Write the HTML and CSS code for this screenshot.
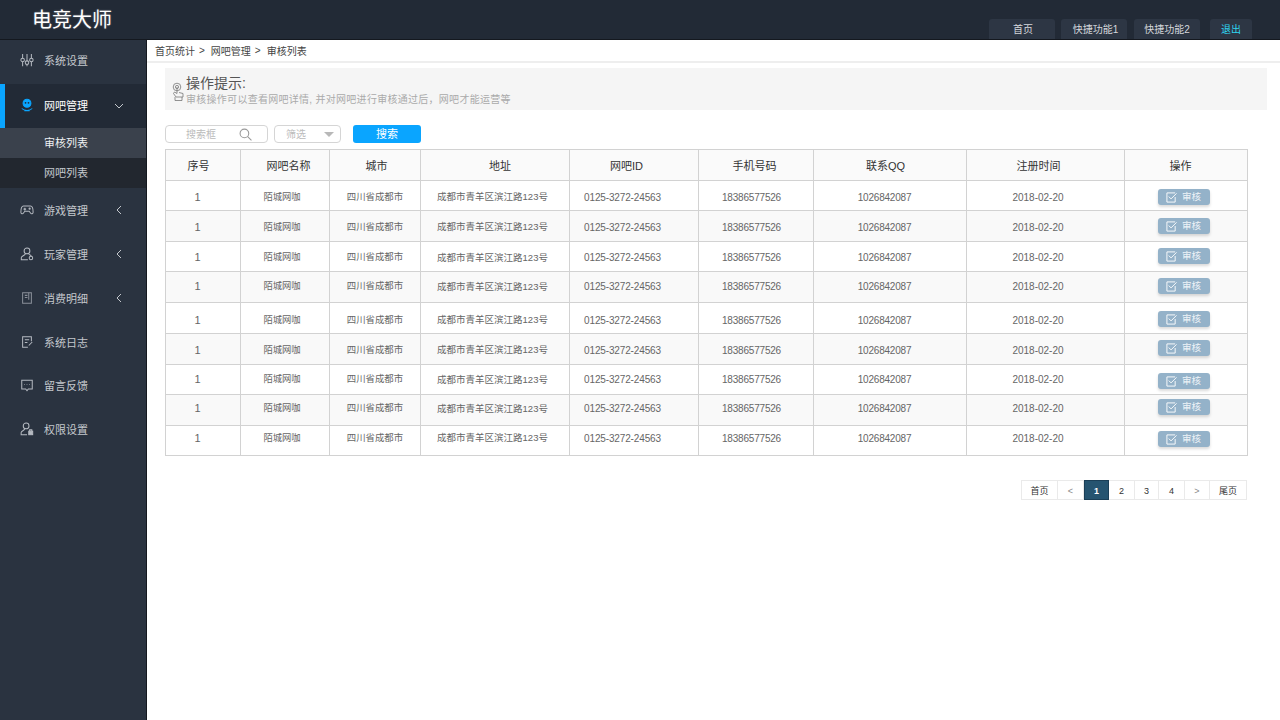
FILE: index.html
```html
<!DOCTYPE html>
<html lang="zh">
<head>
<meta charset="utf-8">
<title>电竞大师</title>
<link rel="stylesheet" href="styles.css">
</head>
<body>
<header class="topbar">
  <div class="logo">电竞大师</div>
  <nav class="tabs">
    <a class="tab t1">首页</a>
    <a class="tab t1">快捷功能1</a>
    <a class="tab t1">快捷功能2</a>
    <a class="tab exit">退出</a>
  </nav>
</header>
<div class="body">
  <aside class="sidebar">
    <div class="item up2">
      <svg class="ico" viewBox="0 0 16 16"><path d="M3 1v14M8 1v14M13 1v14"/><circle cx="3" cy="8" r="2" class="f"/><circle cx="8" cy="11" r="2" class="f"/><circle cx="13" cy="8" r="2" class="f"/></svg>
      <span>系统设置</span>
    </div>
    <div class="item active up1">
      <svg class="ico blue" viewBox="0 0 16 16"><circle cx="8" cy="6" r="4.500" fill="#0aa5ff"/><circle cx="6.300" cy="5.500" r="1" fill="#222a36" stroke="none"/><circle cx="9.700" cy="5.500" r="1" fill="#222a36" stroke="none"/><path d="M2 12c3 3 9 3 12 0M5 14.500h6"/></svg>
      <span>网吧管理</span>
      <svg class="chev" viewBox="0 0 10 10"><path d="M1 3l4 4 4-4"/></svg>
    </div>
    <div class="sub sel">审核列表</div>
    <div class="sub">网吧列表</div>
    <div class="item">
      <svg class="ico" viewBox="0 0 16 16"><path d="M4 3.500h8c2 0 3 4 3 7 0 2-2 2.500-3 1l-1.500-2h-5L4 11.500c-1 1.500-3 1-3-1 0-3 1-7 3-7zM4 7h3M5.500 5.500v3"/><circle cx="11" cy="6.500" r=".7"/></svg>
      <span>游戏管理</span>
      <svg class="chev" viewBox="0 0 10 10"><path d="M7 1L3 5l4 4"/></svg>
    </div>
    <div class="item">
      <svg class="ico" viewBox="0 0 16 16"><circle cx="8" cy="4.500" r="3.300"/><path d="M6 8c-1 2-4 2-4.500 4v2.500H9M10 8c1 1 2 1.500 3 2"/><circle cx="12.500" cy="12.500" r="2"/></svg>
      <span>玩家管理</span>
      <svg class="chev" viewBox="0 0 10 10"><path d="M7 1L3 5l4 4"/></svg>
    </div>
    <div class="item">
      <svg class="ico dimmed" viewBox="0 0 16 16"><path d="M3 2h10v12H3zM5.500 5h3M5.500 7.500h3"/><path d="M10 2v8"/></svg>
      <span>消费明细</span>
      <svg class="chev" viewBox="0 0 10 10"><path d="M7 1L3 5l4 4"/></svg>
    </div>
    <div class="item">
      <svg class="ico" viewBox="0 0 16 16"><path d="M13 7V2H3v12h6M5.500 5.500h5M5.500 8.500h3M10 12l4-4"/></svg>
      <span>系统日志</span>
    </div>
    <div class="item up1">
      <svg class="ico" viewBox="0 0 16 16"><path d="M2 2.500h12v10H9.500L8 14.500 6.500 12.500H2z"/><path d="M5 7.500h.6M7.700 7.500h.6M10.400 7.500h.6"/></svg>
      <span>留言反馈</span>
    </div>
    <div class="item up1">
      <svg class="ico" viewBox="0 0 16 16"><circle cx="7" cy="4.500" r="3.300"/><path d="M5.300 8c-.8 2-3.600 2-4 4v2.500H8"/><rect x="10" y="10.500" width="4.500" height="4" fill="#b5bac1"/><path d="M11 10.500V9h2.500v1.500"/></svg>
      <span>权限设置</span>
    </div>
  </aside>
  <main class="main">
    <div class="crumbs"><span>首页统计</span><i>&gt;</i><span>网吧管理</span><i>&gt;</i><span>审核列表</span></div>
    <div class="content">
      <section class="hint">
        <svg class="hand" viewBox="0 0 12 20"><circle cx="5" cy="5" r="3.800"/><circle cx="5" cy="5" r="1.600"/><path d="M5 5v6.500L2.500 10 1.500 11.500 4 15h7v-3.500L7 10.500M3 15v3.500h7V15"/></svg>
        <div class="hint-text">
          <h2>操作提示:</h2>
          <p>审核操作可以查看网吧详情, 并对网吧进行审核通过后，网吧才能运营等</p>
        </div>
      </section>
      <form class="filters">
        <div class="search"><span>搜索框</span><svg viewBox="0 0 12 12"><circle cx="5" cy="5" r="4"/><path d="M8 8l3.500 3.500"/></svg></div>
        <div class="select"><span>筛选</span><b class="caret"></b></div>
        <div class="go">搜索</div>
      </form>
      <table class="grid">
        <colgroup><col class="c1"><col class="c2"><col class="c3"><col class="c4"><col class="c5"><col class="c6"><col class="c7"><col class="c8"><col class="c9"></colgroup>
        <thead><tr><th>序号</th><th>网吧名称</th><th>城市</th><th>地址</th><th>网吧ID</th><th>手机号码</th><th>联系QQ</th><th>注册时间</th><th>操作</th></tr></thead>
        <tbody>
          <tr><td>1</td><td>陌城网咖</td><td>四川省成都市</td><td class="addr">成都市青羊区滨江路123号</td><td>0125-3272-24563</td><td>18386577526</td><td>1026842087</td><td>2018-02-20</td><td class="op"><a class="audit"><svg viewBox="0 0 12 12"><path d="M10 5.500V11H1V1h9"/><path d="M3 5l2.500 2.500L11.500 1.500"/></svg>审核</a></td></tr>
          <tr><td>1</td><td>陌城网咖</td><td>四川省成都市</td><td class="addr">成都市青羊区滨江路123号</td><td>0125-3272-24563</td><td>18386577526</td><td>1026842087</td><td>2018-02-20</td><td class="op"><a class="audit"><svg viewBox="0 0 12 12"><path d="M10 5.500V11H1V1h9"/><path d="M3 5l2.500 2.500L11.500 1.500"/></svg>审核</a></td></tr>
          <tr><td>1</td><td>陌城网咖</td><td>四川省成都市</td><td class="addr">成都市青羊区滨江路123号</td><td>0125-3272-24563</td><td>18386577526</td><td>1026842087</td><td>2018-02-20</td><td class="op"><a class="audit"><svg viewBox="0 0 12 12"><path d="M10 5.500V11H1V1h9"/><path d="M3 5l2.500 2.500L11.500 1.500"/></svg>审核</a></td></tr>
          <tr><td>1</td><td>陌城网咖</td><td>四川省成都市</td><td class="addr">成都市青羊区滨江路123号</td><td>0125-3272-24563</td><td>18386577526</td><td>1026842087</td><td>2018-02-20</td><td class="op"><a class="audit"><svg viewBox="0 0 12 12"><path d="M10 5.500V11H1V1h9"/><path d="M3 5l2.500 2.500L11.500 1.500"/></svg>审核</a></td></tr>
          <tr><td>1</td><td>陌城网咖</td><td>四川省成都市</td><td class="addr">成都市青羊区滨江路123号</td><td>0125-3272-24563</td><td>18386577526</td><td>1026842087</td><td>2018-02-20</td><td class="op"><a class="audit"><svg viewBox="0 0 12 12"><path d="M10 5.500V11H1V1h9"/><path d="M3 5l2.500 2.500L11.500 1.500"/></svg>审核</a></td></tr>
          <tr><td>1</td><td>陌城网咖</td><td>四川省成都市</td><td class="addr">成都市青羊区滨江路123号</td><td>0125-3272-24563</td><td>18386577526</td><td>1026842087</td><td>2018-02-20</td><td class="op"><a class="audit"><svg viewBox="0 0 12 12"><path d="M10 5.500V11H1V1h9"/><path d="M3 5l2.500 2.500L11.500 1.500"/></svg>审核</a></td></tr>
          <tr><td>1</td><td>陌城网咖</td><td>四川省成都市</td><td class="addr">成都市青羊区滨江路123号</td><td>0125-3272-24563</td><td>18386577526</td><td>1026842087</td><td>2018-02-20</td><td class="op"><a class="audit"><svg viewBox="0 0 12 12"><path d="M10 5.500V11H1V1h9"/><path d="M3 5l2.500 2.500L11.500 1.500"/></svg>审核</a></td></tr>
          <tr><td>1</td><td>陌城网咖</td><td>四川省成都市</td><td class="addr">成都市青羊区滨江路123号</td><td>0125-3272-24563</td><td>18386577526</td><td>1026842087</td><td>2018-02-20</td><td class="op"><a class="audit"><svg viewBox="0 0 12 12"><path d="M10 5.500V11H1V1h9"/><path d="M3 5l2.500 2.500L11.500 1.500"/></svg>审核</a></td></tr>
          <tr><td>1</td><td>陌城网咖</td><td>四川省成都市</td><td class="addr">成都市青羊区滨江路123号</td><td>0125-3272-24563</td><td>18386577526</td><td>1026842087</td><td>2018-02-20</td><td class="op"><a class="audit"><svg viewBox="0 0 12 12"><path d="M10 5.500V11H1V1h9"/><path d="M3 5l2.500 2.500L11.500 1.500"/></svg>审核</a></td></tr>
        </tbody>
      </table>
      <div class="pager">
        <a class="p w37">首页</a><a class="p w26 dim">&lt;</a><a class="p w25 on">1</a><a class="p w26">2</a><a class="p w24">3</a><a class="p w26">4</a><a class="p w25 dim">&gt;</a><a class="p w37">尾页</a>
      </div>
    </div>
  </main>
</div>
</body>
</html>
```
FILE: styles.css
```css
* { box-sizing: border-box; }
html, body { margin: 0; height: 100%; }
body {
  width: 1280px; height: 720px; overflow: hidden; background: #fff;
  font-family: "Liberation Sans", "Noto Sans CJK SC", sans-serif;
  font-size: 10px; color: #666;
  display: flex; flex-direction: column;
}
.topbar {
  height: 40px; flex: none; background: #222a36; border-bottom: 1px solid #14181f;
  display: flex; justify-content: space-between; padding-left: 32px;
}
.logo { font-size: 20px; line-height: 40px; color: #fff; text-shadow: 0 0 2px rgba(255,255,255,.35); }
.tabs { display: flex; align-items: flex-end; margin-right: 28px; }
.tab {
  height: 20px; line-height: 21px; text-align: center; font-size: 10px;
  background: #2d3644; border-radius: 3px 3px 0 0; color: #d5d8dc;
}
.t1 { width: 66px; margin-right: 6px; }
.t1:first-child { padding-left: 2px; margin-right: 6px; }
.t1:nth-child(2) { margin-right: 7px; padding-left: 3px; }
.exit { width: 42px; margin-left: 4px; color: #2fd5f0; }

.body { flex: 1; display: flex; min-height: 0; }
.sidebar {
  width: 147px; flex: none; background: #2a3340; border-right: 1px solid #14181f;
  color: #c4c8cd; font-size: 11px;
}
.item {
  height: 44px; display: flex; align-items: center; padding-left: 20px; position: relative;
}
.item span { margin-left: 10px; }
.up1 { padding-bottom: 2px; }
.up2 { padding-bottom: 4px; }
.active { background: #222a36; border-left: 5px solid #0aa5ff; padding-left: 15px; color: #fff; }
.ico { width: 14px; height: 14px; fill: none; stroke: #b5bac1; stroke-width: 1.15; flex: none; }
.ico .f { fill: #2a3340; }
.ico.blue { stroke: #0aa5ff; }
.ico.dimmed { stroke: #8a9099; }
.chev { position: absolute; left: 114px; top: 17px; width: 10px; height: 10px; fill: none; stroke: #c4c8cd; stroke-width: 1; }
.active .chev { left: 109px; }
.sub { height: 30px; line-height: 30px; padding-left: 44px; background: #22272f; }
.sub.sel { background: #3a414c; color: #eef0f2; }

.main { flex: 1; min-width: 0; }
.crumbs {
  height: 23px; display: flex; align-items: center; padding-left: 8px; color: #444;
  border-bottom: 2px solid #eee;
}
.crumbs i { font-style: normal; margin: 0 6px 0 4px; }
.content { padding: 5px 0 0 18px; }
.hint {
  width: 1102px; height: 42px; background: #f5f5f5;
  display: flex; align-items: flex-start; padding: 7px 0 0 7px;
}
.hand { width: 12px; height: 20px; margin-top: 7px; fill: none; stroke: #777; stroke-width: .8; flex: none; }
.hint-text { margin-left: 2px; }
.hint h2 { margin: 0; font-size: 14px; line-height: 16px; font-weight: 400; color: #555; }
.hint p { margin: 2px 0 0; font-size: 10px; line-height: 14px; color: #aaa; letter-spacing: .28px; }
.filters { height: 18px; margin: 15px 0 6px; display: flex; }
.search, .select {
  height: 18px; border: 1px solid #d5d5d5; border-radius: 4px; color: #bbb;
  position: relative; line-height: 17px;
}
.search { width: 103px; padding-left: 20px; }
.search svg { position: absolute; left: 73px; top: 2px; width: 13px; height: 13px; fill: none; stroke: #999; stroke-width: 1; }
.select { width: 67px; margin-left: 6px; padding-left: 11px; }
.caret {
  position: absolute; right: 6px; top: 6px; border-style: solid; border-width: 5px 5px 0 5px;
  border-color: #b8b8b8 transparent transparent transparent; width: 0; height: 0;
}
.go {
  width: 68px; height: 18px; margin-left: 12px; background: #0aa5ff; border-radius: 3px;
  color: #fff; font-size: 11px; line-height: 18px; text-align: center;
}

.grid { width: 1082px; table-layout: fixed; border-collapse: collapse; }
.c1 { width: 75px; } .c2 { width: 89px; } .c3 { width: 91px; } .c4 { width: 149px; }
.c5 { width: 129px; } .c6 { width: 115px; } .c7 { width: 153px; } .c8 { width: 158px; } .c9 { width: 123px; }
.grid th, .grid td { border: 1px solid #d2d2d2; text-align: center; padding: 0; }
.grid th { height: 31px; background: #fafafa; font-size: 11px; font-weight: 400; color: #333; }
.grid td { vertical-align: top; color: #666; font-size: 10px; line-height: 14px; }
.grid th:nth-child(1) { padding-right: 9px; }
.grid th:nth-child(2) { padding-left: 7px; }
.grid th:nth-child(3) { padding-left: 3px; }
.grid th:nth-child(4) { padding-left: 10px; }
.grid th:nth-child(5) { padding-right: 15px; }
.grid th:nth-child(6) { padding-right: 3px; }
.grid th:nth-child(7) { padding-right: 9px; }
.grid th:nth-child(8) { padding-right: 14px; }
.grid th:nth-child(9) { padding-right: 11px; }
.grid tbody td:nth-child(1) { padding-right: 11px; font-size: 11px; line-height: 12px; }
.grid tbody td:nth-child(2) { padding-right: 6px; font-size: 9.3px; line-height: 12px; }
.grid tbody td:nth-child(3) { font-size: 9.4px; line-height: 12px; }
.grid tbody td:nth-child(4) { padding-right: 5px; font-size: 9.5px; line-height: 12px; }
.grid tbody td:nth-child(5) { padding-right: 23px; letter-spacing: -.14px; }
.grid tbody td:nth-child(6) { padding-right: 9px; letter-spacing: -.2px; }
.grid tbody td:nth-child(7) { padding-right: 11px; letter-spacing: -.2px; }
.grid tbody td:nth-child(8) { padding-right: 15px; }
.grid tbody td:nth-child(9) { padding-right: 5px; }
.grid tbody tr:nth-child(even) { background: #f9f9f9; }
.grid tbody tr:nth-child(1) { height: 30px; }
.grid tbody tr:nth-child(2) { height: 31px; }
.grid tbody tr:nth-child(3) { height: 30px; }
.grid tbody tr:nth-child(4) { height: 31px; }
.grid tbody tr:nth-child(5) { height: 31px; }
.grid tbody tr:nth-child(6) { height: 31px; }
.grid tbody tr:nth-child(7) { height: 30px; }
.grid tbody tr:nth-child(8) { height: 31px; }
.grid tbody tr:nth-child(9) { height: 30px; }
.grid tbody tr:nth-child(1) td { padding-top: 10px; }
.grid tbody tr:nth-child(2) td { padding-top: 10px; }
.grid tbody tr:nth-child(3) td { padding-top: 9px; }
.grid tbody tr:nth-child(4) td { padding-top: 8px; }
.grid tbody tr:nth-child(5) td { padding-top: 11px; }
.grid tbody tr:nth-child(6) td { padding-top: 10px; }
.grid tbody tr:nth-child(7) td { padding-top: 8px; }
.grid tbody tr:nth-child(8) td { padding-top: 7px; }
.grid tbody tr:nth-child(9) td { padding-top: 6px; }
.grid tbody td.addr { padding-top: 11px; }
.grid tbody tr:nth-child(3) td.addr { padding-top: 10px; }
.grid tbody tr:nth-child(4) td.addr { padding-top: 9px; }
.grid tbody tr:nth-child(7) td.addr { padding-top: 9px; }
.grid tbody tr:nth-child(8) td.addr { padding-top: 8px; }
.grid tbody tr:nth-child(9) td.addr { padding-top: 6px; }
.grid tbody tr:nth-child(1) td.op { padding-top: 8px; }
.grid tbody tr:nth-child(2) td.op { padding-top: 7px; }
.grid tbody tr:nth-child(3) td.op { padding-top: 6px; }
.grid tbody tr:nth-child(4) td.op { padding-top: 6px; }
.grid tbody tr:nth-child(5) td.op { padding-top: 8px; }
.grid tbody tr:nth-child(6) td.op { padding-top: 6px; }
.grid tbody tr:nth-child(7) td.op { padding-top: 8px; }
.grid tbody tr:nth-child(8) td.op { padding-top: 4px; }
.grid tbody tr:nth-child(9) td.op { padding-top: 5px; }
.audit {
  display: inline-flex; align-items: center; justify-content: center;
  width: 52px; height: 16px; background: #94b2c9; border-radius: 3px; color: #eef3f7;
  box-shadow: 0 2px 3px rgba(0,0,0,.15); font-size: 9.5px; line-height: 16px; vertical-align: top;
}
.audit svg { width: 11px; height: 11px; margin-right: 5px; fill: none; stroke: #fff; stroke-width: 1; }
.pager { width: 1082px; margin-top: 24px; display: flex; justify-content: flex-end; }
.p {
  height: 20px; line-height: 20px; text-align: center; font-size: 9px; color: #333;
  border: 1px solid #eaeaea; border-left: 0; flex: none;
}
.p:first-child { border-left: 1px solid #eaeaea; }
.w37 { width: 37px; } .w26 { width: 26px; } .w25 { width: 25px; } .w24 { width: 24px; }
.dim { color: #888; }
.on { background: #265470; border: 1px solid #1b3f57; color: #fff; font-weight: 700; }
```
